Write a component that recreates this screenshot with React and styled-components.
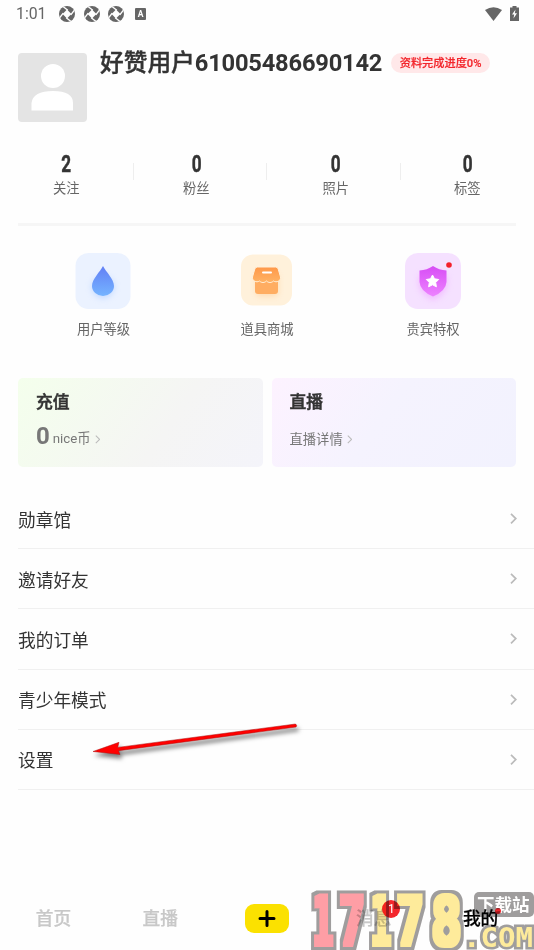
import styled, { createGlobalStyle } from 'styled-components';

const GlobalStyle = createGlobalStyle`
  body {
    margin: 0;
    background: #fefefe;
    font-family: Roboto, "Noto Sans CJK SC", sans-serif;
    color: #333;
  }
`

const Screen = styled.div`
  position: relative;
  display: flex;
  flex-direction: column;
  width: 534px;
  height: 950px;
  overflow: hidden;
`

const StatusBar = styled.div`
  display: flex;
  align-items: center;
  height: 27px;
  padding: 0 15px 0 16px;
  color: #666;
`

const Clock = styled.span`
  width: 43px;
  font-size: 15.8px;
  line-height: 28px;
  padding-top: 1px;
`

const StatusIcons = styled.div`
  display: flex;
  align-items: center;
  gap: ${props => props.gap};
  margin-left: ${props => props.left || 0};
`

const Profile = styled.div`
  display: flex;
  align-items: flex-start;
  height: 96px;
  padding: 26px 18px 0;
  box-sizing: border-box;
  margin-bottom: 27px;
`

const Avatar = styled.svg`
  width: 69px;
  height: 69px;
  border-radius: 4px;
  background: #e4e4e4;
`

const UserName = styled.h1`
  margin: -6px 9px 0 13px;
  font-size: 23.7px;
  line-height: 32px;
  font-weight: 500;
  white-space: nowrap;
  -webkit-text-stroke: 0.4px;
`

const UserId = styled.span`
  font-weight: 700;
  letter-spacing: -0.2px;
  -webkit-text-stroke: 0;
`

const Progress = styled.span`
  height: 20px;
  padding: 0 8.5px;
  border-radius: 10px;
  background: #ffe8e9;
  color: #f3262c;
  font-size: 11.2px;
  line-height: 21px;
  font-weight: 500;
  white-space: nowrap;
  -webkit-text-stroke: 0.2px;
`

const Stats = styled.div`
  display: flex;
  height: 73px;
`

const Stat = styled.div`
  display: flex;
  align-items: flex-start;
  justify-content: space-between;
  width: 133.5px;
`

const StatBody = styled.div`
  flex: 1;
  text-align: center;
  padding-left: ${props => props.left || 0};
  padding-right: ${props => props.right || 0};
`

const StatNumber = styled.div`
  font-size: 24.5px;
  line-height: 28px;
  font-weight: 700;
  transform: scaleX(0.7);
  -webkit-text-stroke: 0.5px;
`

const StatSplit = styled.i`
  width: 1px;
  height: 17px;
  margin-top: 13px;
  background: #eee;
`

const Label = styled.div`
  font-size: 13.3px;
  line-height: 22px;
  color: #666;
`

const Divider = styled.div`
  height: 3px;
  margin: 0 18px;
  background: #f6f6f6;
`

const Shortcuts = styled.div`
  display: grid;
  grid-template-columns: 165px 162px 170px;
  height: 152px;
  padding: 27px 16px 0 21px;
  box-sizing: border-box;
`

const Shortcut = styled.div`
  display: flex;
  flex-direction: column;
  align-items: center;
  gap: 10px;
`

const ShortcutIcon = styled.svg`
  width: 56px;
  height: 56px;
  overflow: visible;
  margin-right: 1px;
`

const Cards = styled.div`
  display: flex;
  gap: 9px;
  padding: 0 18px;
  margin-bottom: 22px;
`

const Card = styled.div`
  flex: 1;
  height: 89px;
  padding: 11px 18px 0;
  box-sizing: border-box;
  border-radius: 5px;
  background: ${props => props.bg};
`

const CardTitle = styled.h2`
  margin: 0;
  font-size: 16.8px;
  line-height: 26px;
  font-weight: 500;
  -webkit-text-stroke: 0.5px;
`

const CardLine = styled.div`
  display: flex;
  align-items: baseline;
  height: 32px;
  margin-top: ${props => props.top};
  color: #777;
  font-size: 13.3px;
  line-height: 32px;
`

const CoinName = styled.span`
  position: relative;
  top: -1px;
`

const Coins = styled.b`
  font-size: 24px;
  margin-right: 3px;
`

const Chevron = styled.svg`
  width: ${props => props.size}px;
  height: ${props => props.size * 1.6}px;
  margin-left: ${props => props.left || 0};
  fill: none;
  stroke: #bbb;
  stroke-width: ${props => props.weight || 1.7};
`

const Row = styled.div`
  display: flex;
  align-items: center;
  justify-content: space-between;
  height: 60.2px;
  margin-left: 18px;
  padding-right: 17.5px;
  box-sizing: border-box;
  border-bottom: 1px solid #f0f0f0;
`

const RowName = styled.span`
  padding-top: 4px;
  font-size: 17.7px;
  line-height: 28px;
`

const Arrow = styled.svg`
  position: absolute;
  left: 80px;
  top: 710px;
  filter: drop-shadow(2px 4px 2px rgba(0, 0, 0, 0.5));
`

const TabBar = styled.nav`
  display: flex;
  align-items: center;
  height: 63px;
  margin-top: auto;
`

const Tab = styled.div`
  position: relative;
  display: flex;
  justify-content: center;
  flex: 1;
  font-size: 17.7px;
  line-height: 26px;
  font-weight: 500;
  -webkit-text-stroke: 0.25px;
  color: ${props => props.$active ? '#000' : '#c8c8c8'};
`

const AddButton = styled.svg`
  width: 44px;
  height: 29px;
  border-radius: 9px;
  background: #fbe100;
`

const Badge = styled.span`
  position: absolute;
  left: 62px;
  top: -6px;
  width: 18px;
  height: 18px;
  border-radius: 9px;
  background: #f3262c;
  color: #fff;
  font-size: 12px;
  line-height: 18px;
  font-weight: 400;
  text-align: center;
  -webkit-text-stroke: 0;
`

const Dot = styled.span`
  position: absolute;
  right: 33px;
  top: 2px;
  width: 6px;
  height: 6px;
  border-radius: 50%;
  background: #f3262c;
`

const Watermark = styled.svg`
  position: absolute;
  left: 306px;
  top: 886px;
  mix-blend-mode: multiply;
  font-family: "DejaVu Sans Mono", monospace;
  font-weight: 700;
`

const stats = [
  { name: '关注', value: 2 },
  { name: '粉丝', value: 0, right: '7px' },
  { name: '照片', value: 0, left: '5px' },
  { name: '标签', value: 0 },
]

const rows = ['勋章馆', '邀请好友', '我的订单', '青少年模式', '设置']

const digits = [
  { char: '1', x: 7, width: 20, fill: '#ff9fa6' },
  { char: '7', x: 33, width: 26, fill: '#ff9fa6' },
  { char: '1', x: 65, width: 20, fill: '#ffec9c' },
  { char: '7', x: 90, width: 28, fill: '#ffec9c' },
  { char: '8', x: 125, width: 31, fill: '#ffec9c' },
]

function Aperture () {
  return (
    <svg width="16" height="16" viewBox="0 0 16 16">
      <circle cx="8" cy="8" r="8" fill="#666" />
      <path d="M8 3.600 12.400 8 8 12.400 3.600 8Z" fill="#fefefe" />
      <path d="M8.800 4.200 4.300.8M11.800 8.800 15.200 4.300M7.200 11.800 11.700 15.200M4.200 7.200.8 11.700" stroke="#fefefe" strokeWidth="1.400" />
    </svg>
  );
}

function ChevronIcon (props) {
  return (
    <Chevron viewBox="0 0 7 11" {...props}>
      <path d="M1 .8 5.8 5.5 1 10.2" />
    </Chevron>
  );
}

function App () {
  return (
    <Screen>
      <GlobalStyle />
      <StatusBar>
        <Clock>1:01</Clock>
        <StatusIcons gap="8.5px">
          <Aperture />
          <Aperture />
          <Aperture />
        </StatusIcons>
        <StatusIcons left="11px">
          <svg width="11" height="12" viewBox="0 0 11 12">
            <rect width="11" height="12" rx="1" fill="#666" />
            <text x="5.5" y="9" fontSize="8.5" fontWeight="700" textAnchor="middle" fill="#fff">A</text>
          </svg>
        </StatusIcons>
        <StatusIcons gap="8px" left="auto">
          <svg width="17" height="14" viewBox="0 0 17 14">
            <path d="M0 3Q8.500-2.500 17 3L8.500 14Z" fill="#666" />
          </svg>
          <svg width="9" height="15" viewBox="0 0 9 15">
            <path d="M2.500 0h4v1.500H9V15H0V1.500h2.500Z" fill="#666" />
            <path d="M5.500 3.500 2 8.500h2.200L3.500 12.500 7 7.300H4.800Z" fill="#fff" />
          </svg>
        </StatusIcons>
      </StatusBar>

      <Profile>
        <Avatar viewBox="0 0 69 69">
          <circle cx="35" cy="23" r="12" fill="#fff" />
          <path d="M13.500 57.500V50Q15 38 35 38T55 50v7.500Z" fill="#fff" />
        </Avatar>
        <UserName>好赞用户<UserId>61005486690142</UserId></UserName>
        <Progress>资料完成进度0%</Progress>
      </Profile>

      <Stats>
        {stats.map((stat, i) => (
          <Stat key={stat.name}>
            <StatBody left={stat.left} right={stat.right}>
              <StatNumber>{stat.value}</StatNumber>
              <Label>{stat.name}</Label>
            </StatBody>
            {i < 3 && <StatSplit />}
          </Stat>
        ))}
      </Stats>
      <Divider />

      <Shortcuts>
        <Shortcut>
          <ShortcutIcon viewBox="0 0 56 56">
            <defs>
              <linearGradient id="drop" x2="0" y2="1">
                <stop stopColor="#627ff5" />
                <stop offset="1" stopColor="#75b4ff" />
              </linearGradient>
              <filter id="soft" x="-50%" y="-50%" width="200%" height="200%">
                <feGaussianBlur stdDeviation="3" />
              </filter>
            </defs>
            <rect x=".5" width="55" height="56" rx="13" fill="#ebf2ff" />
            <ellipse cx="28" cy="34" rx="11" ry="11" fill="#a9c9ff" opacity=".6" filter="url(#soft)" />
            <path d="M28 13C31 19 39 26 39 33A11 10 0 0 1 17 33C17 26 25 19 28 13Z" fill="url(#drop)" />
          </ShortcutIcon>
          <Label>用户等级</Label>
        </Shortcut>
        <Shortcut>
          <ShortcutIcon viewBox="0 0 56 56">
            <defs>
              <linearGradient id="shop" x2="0" y2="1">
                <stop stopColor="#ff9849" />
                <stop offset="1" stopColor="#ffb365" />
              </linearGradient>
            </defs>
            <rect x="2" y="1.500" width="51" height="51" rx="12" fill="#fff1db" />
            <rect x="17" y="20" width="22" height="23" rx="4" fill="#ffbd7c" opacity=".45" filter="url(#soft)" />
            <path d="M16 28h23v10q0 3-3 3h-17q-3 0-3-3Z" fill="#ffad62" />
            <path d="M18.500 14h18q2 0 2.700 2l2.300 8c.5 4-4 6-7 4-2 2-5 2-7 0-2 2-5 2-7 0-3 2-7.500 0-7-4l2.300-8q.7-2 2.700-2Z" fill="url(#shop)" stroke="#fff1db" strokeWidth="1" />
            <path d="M24 19.500h8" stroke="#fff" strokeWidth="2" strokeLinecap="round" />
          </ShortcutIcon>
          <Label>道具商城</Label>
        </Shortcut>
        <Shortcut>
          <ShortcutIcon viewBox="0 0 56 56">
            <defs>
              <linearGradient id="shield" x2="0" y2="1">
                <stop stopColor="#d74df5" />
                <stop offset="1" stopColor="#ed83ff" />
              </linearGradient>
            </defs>
            <rect width="56" height="56" rx="13" fill="#f5e1ff" />
            <path d="M28 18 42 22V33Q39 43 28 47 17 43 14 33V22Z" fill="#ed9cff" opacity=".5" filter="url(#soft)" />
            <path d="M28 13Q34 17 41.500 17.500V29Q41 38 28 43.500 15 38 14.500 29V17.500Q22 17 28 13Z" fill="url(#shield)" />
            <path d="M27.500 22l2 3.800 4.200.7-3 3 .7 4.300-3.900-2-3.900 2 .7-4.300-3-3 4.200-.7Z" fill="#fff" stroke="#fff" strokeWidth="1" strokeLinejoin="round" />
            <circle cx="44" cy="12" r="2.800" fill="#f3202b" />
          </ShortcutIcon>
          <Label>贵宾特权</Label>
        </Shortcut>
      </Shortcuts>

      <Cards>
        <Card bg="linear-gradient(125deg, #f4ffec, #f5f5f4 60%, #f4f4fa)">
          <CardTitle>充值</CardTitle>
          <CardLine top="5px">
            <Coins>0</Coins><CoinName>nice币</CoinName><ChevronIcon size={5.5} weight={1.3} left="4px" />
          </CardLine>
        </Card>
        <Card bg="linear-gradient(125deg, #fdf2ff, #f5f3fe 45%, #f2f2fe)">
          <CardTitle>直播</CardTitle>
          <CardLine top="9px">
            直播详情<ChevronIcon size={5.5} weight={1.3} left="4px" />
          </CardLine>
        </Card>
      </Cards>

      {rows.map(row => (
        <Row key={row}>
          <RowName>{row}</RowName>
          <ChevronIcon size={7} />
        </Row>
      ))}

      <Arrow width="230" height="60" viewBox="0 0 230 60">
        <path d="M13 41.500 39 32.300 37.700 37.400 215.500 14Q217.500 15.500 216 17L38.500 40.700 40 44.500Z" fill="#f00" stroke="#a11" strokeWidth=".5" />
      </Arrow>

      <TabBar>
        <Tab>首页</Tab>
        <Tab>直播</Tab>
        <Tab>
          <AddButton viewBox="0 0 44 29">
            <path d="M22 7.500v14M15 14.500h14" stroke="#000" strokeWidth="3" strokeLinecap="round" />
          </AddButton>
        </Tab>
        <Tab>消息<Badge>1</Badge></Tab>
        <Tab $active>我的<Dot /></Tab>
      </TabBar>

      <Watermark width="228" height="64" viewBox="0 0 228 64">
        <defs>
          <filter id="outline" filterUnits="userSpaceOnUse" x="0" y="0" width="228" height="64" colorInterpolationFilters="sRGB">
            <feMorphology in="SourceGraphic" operator="dilate" radius="2" result="face" />
            <feMorphology in="SourceAlpha" operator="dilate" radius="5" result="edge" />
            <feFlood floodColor="#a09e9e" />
            <feComposite in2="edge" operator="in" result="border" />
            <feMerge>
              <feMergeNode in="border" />
              <feMergeNode in="face" />
            </feMerge>
          </filter>
        </defs>
        <g fontSize="68" filter="url(#outline)">
          {digits.map(digit => (
            <text key={digit.x} x={digit.x} y="59" fill={digit.fill} textLength={digit.width} lengthAdjust="spacingAndGlyphs">{digit.char}</text>
          ))}
        </g>
        <text x="157" y="61" fontSize="26" fill="#ffec9c" stroke="#a09e9e" strokeWidth="5" paintOrder="stroke" textLength="70" lengthAdjust="spacingAndGlyphs">.COM</text>
        <rect x="168" y="6" width="60" height="25" rx="5" fill="#a09e9e" />
        <text x="171" y="25" fontSize="17.500" fill="#fff" fontFamily="Noto Sans CJK SC">下载站</text>
      </Watermark>
    </Screen>
  );
}


export default App;
